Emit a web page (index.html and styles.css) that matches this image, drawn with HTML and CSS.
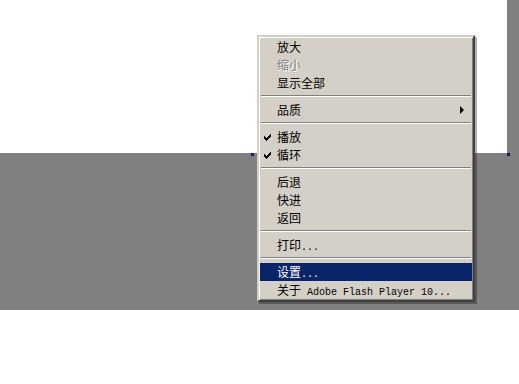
FILE: index.html
```html
<!DOCTYPE html>
<html lang="zh-CN">
<head>
<meta charset="utf-8">
<title>Flash 菜单</title>
<link rel="stylesheet" href="styles.css">
</head>
<body>
<div class="stage">
  <div class="top">
    <div class="canvas"></div>
    <div class="strip"></div>
  </div>
  <div class="band"></div>
  <div class="bottom"></div>

  <span class="handle handle-a"></span>
  <span class="handle handle-b"></span>

  <ul class="menu">
    <li class="item">放大</li>
    <li class="item disabled">缩小</li>
    <li class="item">显示全部</li>
    <li class="sep"></li>
    <li class="item">品质<span class="arrow"></span></li>
    <li class="sep"></li>
    <li class="item checked"><svg class="check" width="7" height="7" viewBox="0 0 7 7"><path d="M0 2h1v1h1v1h1v-1h1v-1h1v-1h1v-1h1v3h-1v1h-1v1h-1v1h-1v1h-1v-1h-1v-1h-1z" fill="#000"/></svg>播放</li>
    <li class="item checked"><svg class="check" width="7" height="7" viewBox="0 0 7 7"><path d="M0 2h1v1h1v1h1v-1h1v-1h1v-1h1v-1h1v3h-1v1h-1v1h-1v1h-1v1h-1v-1h-1v-1h-1z" fill="#000"/></svg>循环</li>
    <li class="sep"></li>
    <li class="item">后退</li>
    <li class="item">快进</li>
    <li class="item">返回</li>
    <li class="sep"></li>
    <li class="item">打印<span class="lat">...</span></li>
    <li class="sep"></li>
    <li class="item active">设置<span class="lat">...</span></li>
    <li class="item">关于<span class="lat"> Adobe Flash Player 10...</span></li>
  </ul>
</div>
</body>
</html>
```

FILE: styles.css
```css
* { box-sizing: border-box; }
html, body { margin: 0; padding: 0; background: #fff; }
.stage {
  position: relative;
  width: 519px;
  height: 384px;
  display: flex;
  flex-direction: column;
  overflow: hidden;
}
.top { display: flex; height: 153px; }
.canvas { flex: 0 0 507px; background: #fff; }
.strip { flex: 1; background: #808080; }
.band { height: 157px; background: #808080; }
.bottom { flex: 1; background: #fff; }

.handle {
  position: absolute;
  width: 3px;
  height: 3px;
  background: #14206a;
}
.handle-a { left: 251px; top: 153px; }
.handle-b { left: 507px; top: 153px; }

.menu {
  position: absolute;
  left: 257px;
  top: 35px;
  width: 218px;
  margin: 0;
  padding: 1px;
  list-style: none;
  background: #d4d0c8;
  border: 2px solid;
  border-color: #d4d0c8 #404040 #404040 #d4d0c8;
  box-shadow: inset 1px 1px 0 #ffffff, inset -1px -1px 0 #808080, 2px 2px 0 rgba(0,0,0,0.3);
  font-family: "Noto Sans CJK SC", "Liberation Sans", sans-serif;
  font-size: 12px;
  color: #000;
}
.item {
  position: relative;
  height: 18px;
  line-height: 18px;
  padding-left: 17px;
  white-space: nowrap;
}
.item.disabled { color: #808080; text-shadow: 1px 1px 0 #fff; }
.item.active { background: #0a246a; color: #fff; }
.lat {
  font-family: "Liberation Mono", monospace;
  font-size: 10px;
}
.check {
  position: absolute;
  left: 4px;
  top: 6px;
}
.arrow {
  position: absolute;
  right: 8px;
  top: 5px;
  width: 0;
  height: 0;
  border-top: 4px solid transparent;
  border-bottom: 4px solid transparent;
  border-left: 4px solid #000;
}
.sep {
  height: 9px;
  padding-top: 3px;
  margin: 0 1px;
}
.sep::before {
  content: "";
  display: block;
  height: 1px;
  background: #808080;
  border-bottom: 1px solid #fff;
  box-sizing: content-box;
}
```
